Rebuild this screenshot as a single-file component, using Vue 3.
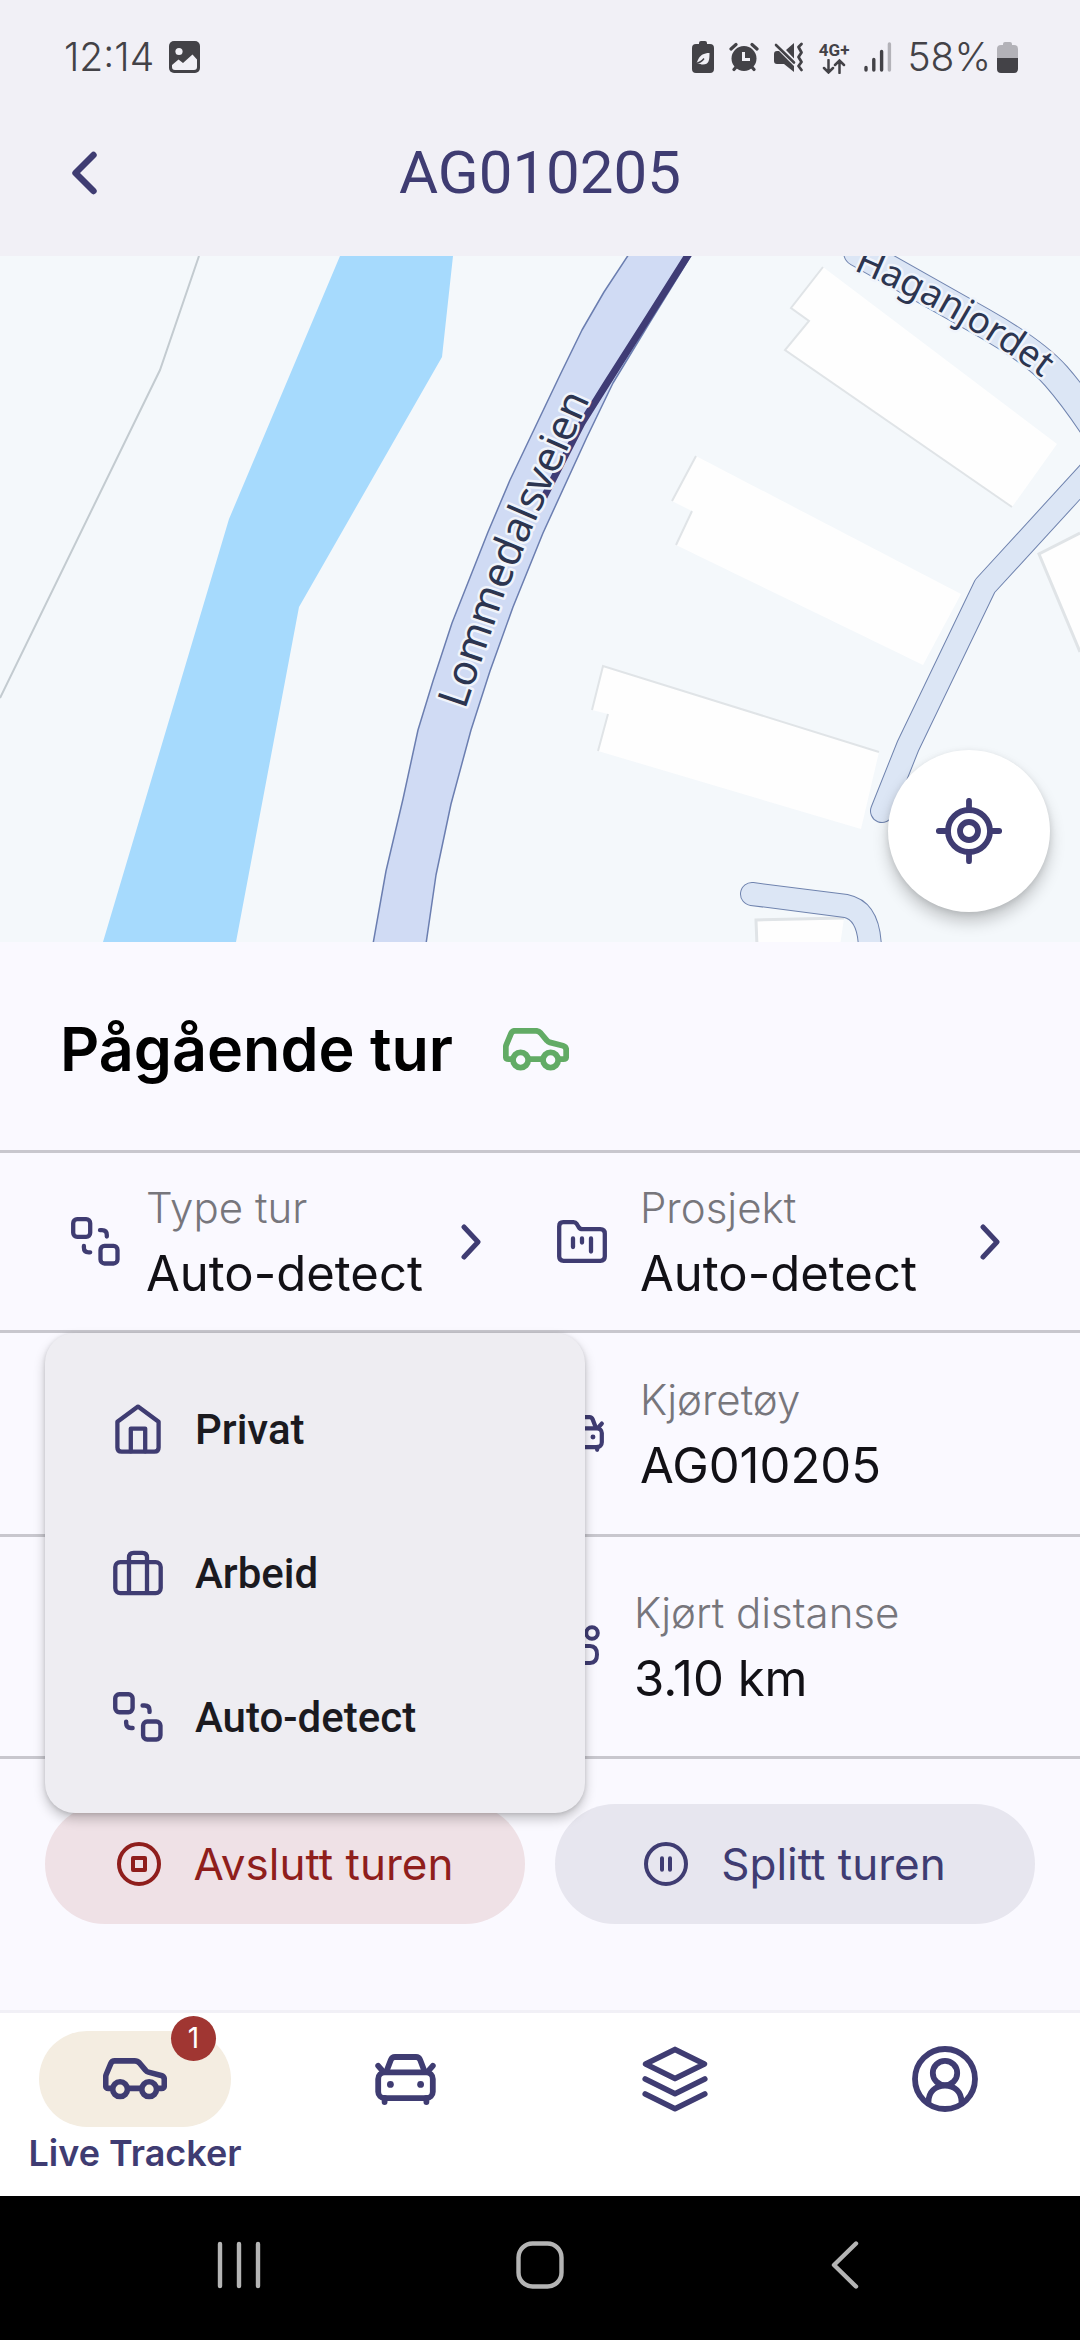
<template>
    <div class="screen">
        <!-- Icon sprite -->
        <svg class="sprite" aria-hidden="true">
            <symbol id="i-link" viewBox="0 0 49 49">
                <g stroke-width="4.3">
                    <rect x="2.2" y="2.2" width="17" height="17.6" rx="4" />
                    <rect x="29.5" y="28.9" width="17" height="17.6" rx="4" />
                    <path d="M29 13.2h2q4.8 0 4.8 4.8v1.5M12.9 29v1.5q0 4.8 4.8 4.8h1.5" />
                </g>
            </symbol>
            <symbol id="i-folder" viewBox="0 0 50 43">
                <g stroke-width="4.3">
                    <path d="M6.2 2.2H16.5Q18.6 2.2 19.8 4L21.6 7Q23 9.2 25.6 9.2H43.2Q47.8 9.2 47.8 13.6V36.5Q47.8 40.8 43.4 40.8H6.6Q2.2 40.8 2.2 36.5V6.4Q2.2 2.2 6.2 2.2Z" />
                    <path d="M16 18.5V27M25 18.5V22.5M34 18.5V31.5" />
                </g>
            </symbol>
            <symbol id="i-home" viewBox="0 0 46 50">
                <g stroke-width="4.3">
                    <path d="M2.4 17.8L23 2.6 43.6 17.8V43.4Q43.6 47.6 39.4 47.6H6.6Q2.4 47.6 2.4 43.4Z" />
                    <path d="M15.8 47.4V24.6H30.2V47.4" />
                </g>
            </symbol>
            <symbol id="i-case" viewBox="0 0 50 45">
                <g stroke-width="4.3">
                    <rect x="2.3" y="11.6" width="45.4" height="31" rx="5" />
                    <path d="M16 42V7Q16 2.3 20.6 2.3H29.4Q34 2.3 34 7V42" />
                </g>
            </symbol>
            <symbol id="i-chevron" viewBox="0 0 20 36">
                <path d="M3 3L17 18 3 33" stroke-width="5" />
            </symbol>
            <symbol id="i-back" viewBox="0 0 26 44">
                <path d="M22.5 4L4.5 22 22.5 40" stroke-width="6.4" />
            </symbol>
            <symbol id="i-car-side" viewBox="0 0 66 43">
                <g stroke-width="5.8">
                    <path d="M8 31.2H5.6Q2.8 31.2 2.8 28.4V19.4Q2.8 18 3.4 16.6L8 5.6Q9.2 2.8 12 2.8H32.6Q35.6 2.8 37.6 5L44 12.6Q45 13.9 46.8 14.4L60 17.8Q63.2 18.8 63.2 22V28.4Q63.2 31.2 60.4 31.2H57M27 31.2H38" />
                    <circle cx="17.6" cy="32" r="7.6" />
                    <circle cx="47.6" cy="32" r="7.6" />
                </g>
            </symbol>
            <symbol id="i-car-front" viewBox="0 0 61 51">
                <g stroke-width="5.8">
                    <path d="M11.6 17L15.8 6Q17 3 20 3H41Q44 3 45.2 6L49.4 17" />
                    <rect x="3.2" y="18.4" width="54.6" height="25.8" rx="6.5" />
                    <path d="M3.2 11.8L7.6 16.8M57.8 11.8L53.4 16.8M9.6 44V48M51.4 44V48" />
                </g>
                <circle cx="15.4" cy="30.4" r="3.4" fill="currentColor" stroke="none" />
                <circle cx="45.6" cy="30.4" r="3.4" fill="currentColor" stroke="none" />
            </symbol>
            <symbol id="i-distance" viewBox="0 0 44 44">
                <g stroke-width="4">
                    <circle cx="35" cy="8" r="5.8" />
                    <path d="M20 21H33Q40 21 40 29.5T33 38H20" />
                </g>
            </symbol>
            <symbol id="i-stop" viewBox="0 0 44 44">
                <g stroke-width="4">
                    <circle cx="22" cy="22" r="20" />
                    <rect x="16" y="16" width="12" height="12" />
                </g>
            </symbol>
            <symbol id="i-pause" viewBox="0 0 44 44">
                <g stroke-width="4">
                    <circle cx="22" cy="22" r="20" />
                    <path d="M18 16.2V27.8M26 16.2V27.8" />
                </g>
            </symbol>
            <symbol id="i-layers" viewBox="0 0 66 66">
                <path d="M33 3.4L62.4 18 33 32.6 3.6 18ZM3.2 33L33 47.8 62.8 33M3.2 48L33 62.8 62.8 48" stroke-width="5.6" />
            </symbol>
            <symbol id="i-user" viewBox="0 0 66 66">
                <g stroke-width="5.8">
                    <circle cx="33" cy="33" r="30" />
                    <circle cx="33" cy="27" r="12.2" />
                    <path d="M16.4 56.5C16.4 45.6 23.4 39.6 33 39.6S49.6 45.6 49.6 56.5" />
                </g>
            </symbol>
            <symbol id="i-locate" viewBox="0 0 66 66">
                <g stroke-width="5.8">
                    <circle cx="33" cy="33" r="21" />
                    <circle cx="33" cy="33" r="9" />
                    <path d="M33 2.8V10M33 56V63.2M2.8 33H10M56 33H63.2" />
                </g>
            </symbol>
        </svg>

        <header class="header">
            <div class="status">
                <div class="status__side">
                    <span class="status__text">12:14</span>
                    <svg width="31" height="32" viewBox="0 0 31 32">
                        <rect width="31" height="32" rx="5" fill="#434247" />
                        <circle cx="10" cy="10.5" r="3.6" fill="#f1f0f6" />
                        <path d="M3 24L9.5 18.5 14 22 23.5 13.5 28 18.5V26Q28 29 25 29H6Q3 29 3 26Z" fill="#f1f0f6" />
                    </svg>
                </div>
                <div class="status__side">
                    <svg width="22" height="32" viewBox="0 0 22 32">
                        <path d="M7 3V2Q7 0 9 0H13Q15 0 15 2V3H18Q22 3 22 7V28Q22 32 18 32H4Q0 32 0 28V7Q0 3 4 3Z" fill="#434247" />
                        <path d="M4 22.5C6 22 5.5 12 17.5 12 17.5 19 17 23.5 11 23.5 8.5 23.5 8 22 4 22.5Z" fill="#f1f0f6" />
                        <path d="M4 22.5Q9 21.5 12 17.5" fill="none" stroke="#434247" stroke-width="1.4" />
                    </svg>
                    <svg width="30" height="30" viewBox="0 0 30 30">
                        <circle cx="15" cy="16.5" r="12.5" fill="#434247" />
                        <path d="M2 7L7 2.5M28 7L23 2.5M5 27.5L8 24M25 27.5L22 24" stroke="#434247" stroke-width="3.2" stroke-linecap="round" />
                        <path d="M14.5 10V17.5H21" fill="none" stroke="#f1f0f6" stroke-width="3" />
                    </svg>
                    <svg width="30" height="30" viewBox="0 0 30 30">
                        <path d="M0 12Q0 9 3 9H5L20 24V30L10 22H3Q0 22 0 19ZM12 8L20 1V16.5Z" fill="#434247" />
                        <path d="M2 3L20 20.5" stroke="#434247" stroke-width="2.6" stroke-linecap="round" />
                        <path d="M27.5 2L24.5 5 27.5 10.500 24.5 15 27.5 20 24.5 24 27.5 28" fill="none" stroke="#434247" stroke-width="2.8" stroke-linecap="round" stroke-linejoin="round" />
                    </svg>
                    <span class="network">
                        <span>4G+</span>
                        <svg width="24" height="15" viewBox="0 0 24 15" fill="none" stroke="#434247" stroke-width="2.5" stroke-linecap="round">
                            <path d="M6.5 1V13M2 9L6.5 13.5 11 9M17.5 14V2M13 6L17.5 1.5 22 6" />
                        </svg>
                    </span>
                    <svg width="28" height="30" viewBox="0 0 28 30" stroke="#434247" stroke-width="3.4" stroke-linecap="round">
                        <path d="M2 25.5V28M9.8 17.5V28M17.6 9.5V28" />
                        <path d="M25.4 2V28" stroke="#b3b2b8" />
                    </svg>
                    <span class="battery">
                        <span class="status__text">58%</span>
                        <svg width="21" height="31" viewBox="0 0 21 31">
                            <path d="M6 3V2Q6 0 8 0H13Q15 0 15 2V3H17Q21 3 21 7V16H0V7Q0 3 4 3Z" fill="#b3b2b8" />
                            <path d="M0 16H21V27Q21 31 17 31H4Q0 31 0 27Z" fill="#434247" />
                        </svg>
                    </span>
                </div>
            </div>
            <div class="appbar">
                <button class="appbar__back" type="button" aria-label="Tilbake">
                    <svg class="icon" width="26" height="44"><use href="#i-back" /></svg>
                </button>
                <h1 class="appbar__title">{{ plate }}</h1>
            </div>
        </header>

        <section class="map">
            <svg class="map__canvas" viewBox="0 0 1080 686" preserveAspectRatio="xMidYMid slice">
                <rect width="1080" height="686" fill="#f4f8fb" />
                <path d="M199 0L160 114 0 442" fill="none" stroke="#c3cbd0" stroke-width="2" />
                <path d="M340 0L229 263 103 686H236L299 351 442 101 453 0Z" fill="#a6dafd" />

                <!-- Buildings -->
                <g fill="#fefefe">
                    <path v-for="shape in buildings" :key="shape" :d="shape" />
                </g>
                <g fill="none" stroke="#e0e4e7" stroke-width="2">
                    <path d="M823 11L791 52 809 65 785 94 1012 251" />
                    <path d="M696 200L672 245M692 255L676 289" />
                    <path d="M598 495L608 458M592 454L603 410 879 496" />
                    <path d="M1080 277L1039 298 1080 396" stroke-width="3" />
                    <path d="M757 690L756 664 844 662" stroke-width="3" />
                </g>

                <!-- Side roads: casing first, then fill -->
                <g fill="none" stroke-linecap="round" stroke-linejoin="round">
                    <g v-for="road in roads" :key="road.d">
                        <path :d="road.d" stroke="#6f83ae" :stroke-width="road.width + 2" />
                        <path :d="road.d" stroke="#dce6f5" :stroke-width="road.width" />
                    </g>
                </g>

                <!-- Main road -->
                <path d="M629 -2L604 36 582 74 561 117 540 161 510 224 488 276 452 367 433 425 418 474 403 543 386 615 373 688H426L436 619 451 548 471 474 490 415 513 351 543 277 587 181 613 127 650 66 692 -2Z" fill="#d0dbf4" stroke="#6b7eb0" stroke-width="1.5" stroke-linejoin="round" />
                <path d="M690 -4L647 64 607 127 582 167 544 241" fill="none" stroke="#3f3c75" stroke-width="7" />

                <path id="lommedal" d="M465 454L482 404 500 351Q534 266 557 217L604 112" fill="none" />
                <path id="hagan" d="M853 14Q975 66 1065 140" fill="none" />
                <text class="map__label map__label--main"><textPath href="#lommedal">Lommedalsveien</textPath></text>
                <text class="map__label"><textPath href="#hagan">Haganjordet</textPath></text>
            </svg>
            <button class="map__locate" type="button" aria-label="Min posisjon">
                <svg class="icon" width="66" height="66"><use href="#i-locate" /></svg>
            </button>
        </section>

        <main class="trip">
            <div class="trip__heading">
                <h2>Pågående tur</h2>
                <svg class="icon icon--green" width="66" height="43"><use href="#i-car-side" /></svg>
            </div>

            <div class="row">
                <div class="cell cell--left">
                    <button class="field" type="button" aria-haspopup="menu" :aria-expanded="menuOpen" @click="menuOpen = !menuOpen">
                        <svg class="icon" width="49" height="49"><use href="#i-link" /></svg>
                        <span class="field__text">
                            <span class="field__label">Type tur</span>
                            <span class="field__value">{{ tripType }}</span>
                        </span>
                        <svg class="icon" width="20" height="36"><use href="#i-chevron" /></svg>
                    </button>
                    <div v-if="menuOpen" class="menu" role="menu">
                        <button v-for="option in options" :key="option.label" class="menu__item" type="button" role="menuitem" @click="selectType(option)">
                            <svg class="icon" width="50" height="50"><use :href="option.icon" /></svg>
                            {{ option.label }}
                        </button>
                    </div>
                </div>
                <div class="cell cell--right">
                    <button class="field" type="button">
                        <svg class="icon" width="50" height="43"><use href="#i-folder" /></svg>
                        <span class="field__text">
                            <span class="field__label">Prosjekt</span>
                            <span class="field__value">Auto-detect</span>
                        </span>
                        <svg class="icon" width="20" height="36"><use href="#i-chevron" /></svg>
                    </button>
                </div>
            </div>
            <div class="row row--vehicle">
                <div class="cell cell--left"></div>
                <div class="cell cell--right">
                    <div class="field">
                        <svg class="icon" width="50" height="37"><use href="#i-car-front" /></svg>
                        <span class="field__text">
                            <span class="field__label">Kjøretøy</span>
                            <span class="field__value">{{ plate }}</span>
                        </span>
                    </div>
                </div>
            </div>
            <div class="row row--distance">
                <div class="cell cell--left"></div>
                <div class="cell cell--right">
                    <div class="field">
                        <svg class="icon" width="44" height="44"><use href="#i-distance" /></svg>
                        <span class="field__text">
                            <span class="field__label">Kjørt distanse</span>
                            <span class="field__value">3.10 km</span>
                        </span>
                    </div>
                </div>
            </div>

            <div class="actions">
                <button class="action action--stop" type="button">
                    <svg class="icon" width="44" height="44"><use href="#i-stop" /></svg>
                    Avslutt turen
                </button>
                <button class="action" type="button">
                    <svg class="icon" width="44" height="44"><use href="#i-pause" /></svg>
                    Splitt turen
                </button>
            </div>
        </main>

        <nav class="tabs">
            <a v-for="tab in tabs" :key="tab.icon" class="tab" :class="{ 'tab--active': tab.label }" href="#" :aria-label="tab.name">
                <span class="tab__pill">
                    <svg class="icon" :width="tab.width" :height="tab.height"><use :href="tab.icon" /></svg>
                    <span v-if="tab.badge" class="tab__badge">{{ tab.badge }}</span>
                </span>
                <span v-if="tab.label" class="tab__label">{{ tab.label }}</span>
            </a>
        </nav>

        <div class="system">
            <button type="button" aria-label="Nylige apper">
                <svg class="icon" width="48" height="48" viewBox="0 0 48 48" stroke-width="4.4"><path d="M5 3V45M24 3V45M43 3V45" /></svg>
            </button>
            <button type="button" aria-label="Hjem">
                <svg class="icon" width="48" height="48" viewBox="0 0 48 48" stroke-width="4.4"><rect x="2.5" y="2.5" width="43" height="43" rx="14" /></svg>
            </button>
            <button type="button" aria-label="Tilbake">
                <svg class="icon" width="48" height="48" viewBox="0 0 48 48" stroke-width="4.4"><path d="M39 2.5L17 24 39 45.5" /></svg>
            </button>
        </div>
    </div>
</template>

<script setup>
import { ref } from 'vue';

const plate = 'AG010205';
const menuOpen = ref(true);
const tripType = ref('Auto-detect');

const options = [
    { label: 'Privat', icon: '#i-home' },
    { label: 'Arbeid', icon: '#i-case' },
    { label: 'Auto-detect', icon: '#i-link' }
];

const tabs = [
    { name: 'Live Tracker', label: 'Live Tracker', icon: '#i-car-side', width: 64, height: 42, badge: 1 },
    { name: 'Kjøretøy', icon: '#i-car-front', width: 61, height: 51 },
    { name: 'Turer', icon: '#i-layers', width: 66, height: 66 },
    { name: 'Profil', icon: '#i-user', width: 66, height: 66 }
];

const buildings = [
    'M823 11L791 52 809 65 785 94 1012 251 1057 188Z',
    'M696 200L672 245 692 255 676 289 923 409 961 338Z',
    'M603 410L592 454 608 458 598 495 861 573 879 496Z',
    'M1090 272L1039 298 1090 420Z',
    'M756 664L844 662 840 690H757Z'
];

const roads = [
    { d: 'M858 -4L982 66Q1035 96 1056 120T1100 180', width: 28 },
    { d: 'M1095 210L985 330 908 490 882 555', width: 22 },
    { d: 'M752 638L846 650Q870 655 870 695', width: 22 }
];

const selectType = (option) => {
    tripType.value = option.label;
    menuOpen.value = false;
};
</script>

<style>
body {
    background: #faf9ff;
}
</style>

<style scoped>
.screen {
    display: flex;
    flex-direction: column;
    min-height: 100vh;
    background: #faf9ff;
    color: #3f3c72;
    font-family: Inter, "Noto Sans", sans-serif;
}

.screen *,
.screen {
    box-sizing: border-box;
}

.sprite {
    position: absolute;
    width: 0;
    height: 0;
}

button {
    margin: 0;
    padding: 0;
    border: none;
    background: transparent;
    color: inherit;
    font: inherit;
    text-align: left;
    cursor: pointer;
}

svg {
    display: block;
    flex-shrink: 0;
}

.icon {
    fill: none;
    stroke: currentColor;
    stroke-linecap: round;
    stroke-linejoin: round;
}

.icon--green {
    color: #62ab65;
}

/* Header */
.header {
    background: #f1f0f6;
}

.status {
    display: flex;
    justify-content: space-between;
    height: 90px;
    padding: 24px 62px 0 64px;
    color: #434247;
}

.status__side {
    display: flex;
    align-items: center;
    gap: 15px;
}

.status__text {
    font-size: 39px;
    font-weight: 300;
    line-height: 48px;
}

.network {
    display: flex;
    flex-direction: column;
    align-items: center;
    font-family: Roboto, sans-serif;
    font-size: 17px;
    font-weight: 700;
    line-height: 18px;
}

.battery {
    display: flex;
    align-items: center;
    gap: 6px;
}

.appbar {
    display: grid;
    grid-template-columns: 120px 1fr 120px;
    align-items: center;
    height: 166px;
}

.appbar__back {
    display: flex;
    align-items: center;
    height: 120px;
    padding-left: 71px;
}

.appbar__title {
    margin: 0;
    font-family: Roboto, sans-serif;
    font-size: 60px;
    font-weight: 400;
    line-height: 72px;
    text-align: center;
}

/* Map */
.map {
    position: relative;
    height: 686px;
}

.map__canvas {
    width: 100%;
    height: 100%;
}

.map__label {
    fill: #2c3550;
    stroke: #f0f4fb;
    stroke-width: 5px;
    stroke-linejoin: round;
    paint-order: stroke;
    font-family: "Noto Sans", sans-serif;
    font-size: 37px;
}

.map__label--main {
    font-size: 42px;
}

.map__locate {
    position: absolute;
    right: 30px;
    bottom: 30px;
    display: flex;
    align-items: center;
    justify-content: center;
    width: 162px;
    height: 162px;
    border-radius: 50%;
    background: #fff;
    box-shadow: 0 10px 16px rgba(0, 0, 0, 0.2), 0 2px 6px rgba(0, 0, 0, 0.1);
}

/* Trip details */
.trip {
    flex: 1;
}

.trip__heading {
    display: flex;
    align-items: center;
    gap: 50px;
    height: 208px;
    padding: 6px 60px 0;
}

.trip__heading h2 {
    margin: 0;
    color: #000;
    font-size: 61px;
    font-weight: 600;
    line-height: 72px;
}

.row {
    display: grid;
    grid-template-columns: 1fr 1fr;
    min-height: 180px;
    border-top: 3px solid #c8c7ce;
}

.row--vehicle {
    min-height: 204px;
}

.row--distance {
    min-height: 225px;
    border-bottom: 3px solid #c8c7ce;
}

.cell {
    position: relative;
    display: flex;
}

.field {
    display: flex;
    flex: 1;
    align-items: center;
}

.cell--left .field {
    gap: 26px;
    padding: 0 59px 0 71px;
}

.cell--right .field {
    gap: 33px;
    padding: 0 80px 0 17px;
}

.field__text {
    display: flex;
    flex: 1;
    flex-direction: column;
    padding-top: 4px;
    white-space: nowrap;
}

.field__label {
    color: #77767c;
    font-size: 42px;
    font-weight: 300;
    line-height: 60px;
}

.field__value {
    color: #121116;
    font-size: 49px;
    line-height: 72px;
}

.menu {
    position: absolute;
    top: calc(100% + 3px);
    left: 45px;
    z-index: 2;
    width: 100%;
    padding: 24px 0;
    border-radius: 30px;
    background: #eeedf2;
    box-shadow: 0 6px 12px rgba(0, 0, 0, 0.22), 0 1px 4px rgba(0, 0, 0, 0.12);
}

.menu__item {
    display: flex;
    align-items: center;
    gap: 32px;
    width: 100%;
    height: 144px;
    padding: 0 68px;
    font-family: Roboto, sans-serif;
    font-size: 42px;
    font-weight: 500;
    color: #1b1a1f;
}

.menu__item .icon {
    color: #3f3c72;
}

.actions {
    display: flex;
    gap: 30px;
    padding: 45px;
}

.action {
    display: flex;
    flex: 1;
    align-items: center;
    justify-content: center;
    gap: 33px;
    height: 120px;
    border-radius: 60px;
    background: #e7e6ef;
    font-size: 44px;
    white-space: nowrap;
}

.action--stop {
    background: #efe1e6;
    color: #8f1e1c;
}

/* Bottom tabs */
.tabs {
    display: grid;
    grid-template-columns: repeat(4, 1fr);
    height: 186px;
    border-top: 3px solid #f1f0f6;
    background: #fff;
}

.tab {
    display: flex;
    flex-direction: column;
    align-items: center;
    padding-top: 18px;
    color: inherit;
    text-decoration: none;
}

.tab__pill {
    position: relative;
    display: flex;
    align-items: center;
    justify-content: center;
    width: 192px;
    height: 96px;
    border-radius: 48px;
}

.tab--active .tab__pill {
    background: #f4ede1;
}

.tab__badge {
    position: absolute;
    top: -15px;
    right: 15px;
    width: 45px;
    height: 45px;
    border-radius: 50%;
    background: #a03632;
    color: #fff;
    font-size: 28px;
    line-height: 45px;
    text-align: center;
}

.tab__label {
    font-size: 36px;
    font-weight: 600;
    line-height: 52px;
}

/* Android navigation */
.system {
    display: grid;
    grid-template-columns: repeat(3, 1fr);
    height: 144px;
    padding: 0 88px;
    background: #000;
    color: #b4b4b4;
}

.system button {
    display: flex;
    align-items: center;
    justify-content: center;
    padding-bottom: 6px;
}
</style>
